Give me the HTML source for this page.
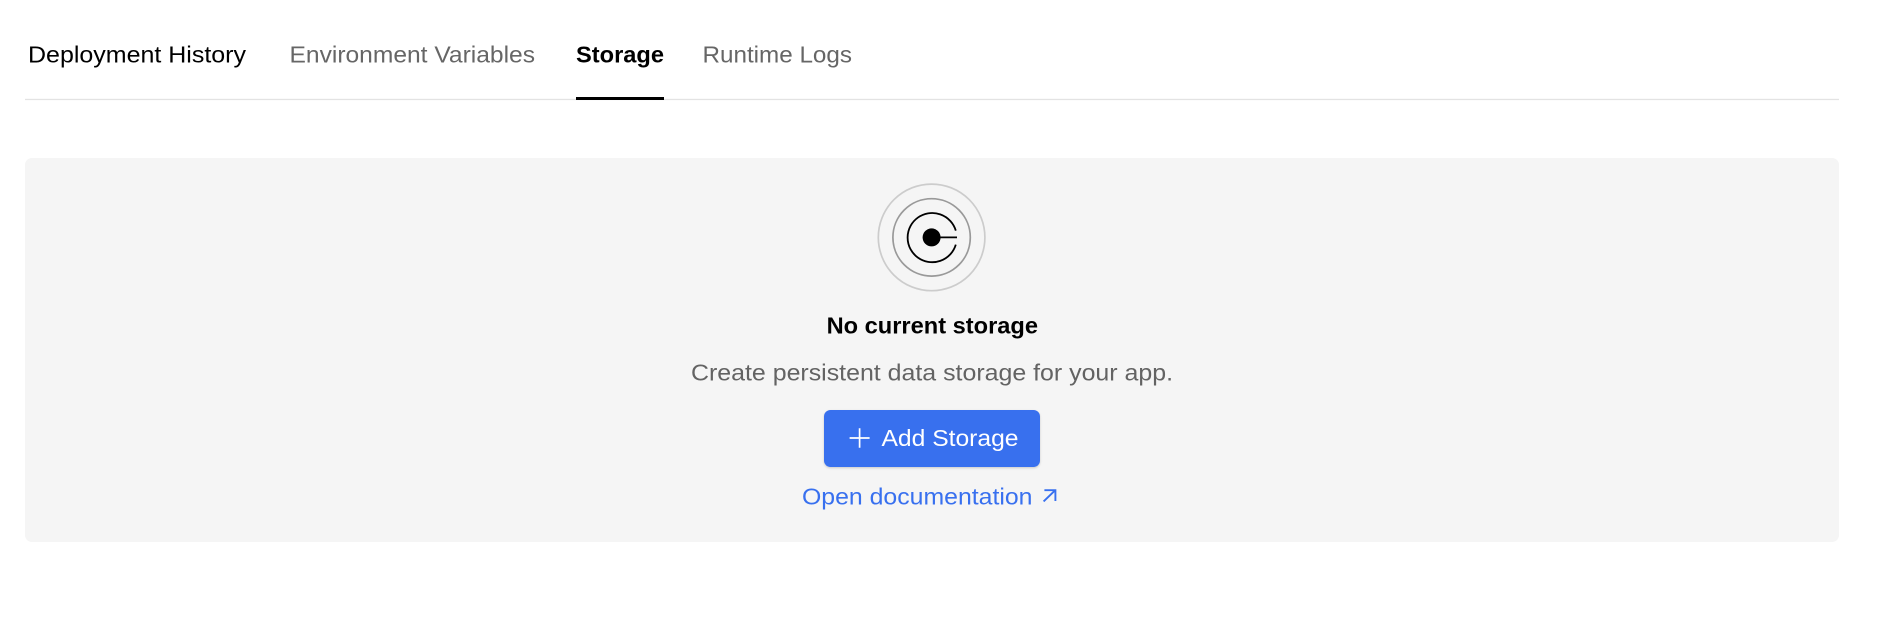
<!DOCTYPE html>
<html lang="en">
<head>
<meta charset="utf-8">
<title>Storage</title>
<style>
html,body{margin:0;padding:0;width:1884px;height:642px;background:#fff;overflow:hidden}
svg{display:block;position:absolute;left:0;top:0}
text{font-family:"Liberation Sans",sans-serif;font-size:23px}
.b{font-weight:700}
</style>
</head>
<body>
<svg width="1884" height="642" viewBox="0 0 1884 642" xmlns="http://www.w3.org/2000/svg">
  <defs>
    <filter id="s" x="-5%" y="-10%" width="110%" height="125%">
      <feDropShadow dx="0" dy="1" stdDeviation="1" flood-color="#000" flood-opacity=".18"/>
    </filter>
  </defs>
  <!-- tabs -->
  <text x="28" y="62.6" fill="#000" textLength="218" lengthAdjust="spacingAndGlyphs">Deployment History</text>
  <text x="289.5" y="62.6" fill="#666" textLength="245.5" lengthAdjust="spacingAndGlyphs">Environment Variables</text>
  <text class="b" x="576" y="62.6" fill="#000" textLength="88" lengthAdjust="spacingAndGlyphs">Storage</text>
  <text x="702.5" y="62.6" fill="#666" textLength="149.5" lengthAdjust="spacingAndGlyphs">Runtime Logs</text>
  <rect x="25" y="98.8" width="1814" height="1.3" fill="#e3e3e3"/>
  <rect x="576" y="97" width="88" height="3" fill="#000"/>
  <!-- card -->
  <rect x="25" y="158" width="1814" height="384" rx="7" fill="#f5f5f5"/>
  <!-- icon -->
  <circle cx="931.6" cy="237.4" r="53.3" fill="none" stroke="#cccccc" stroke-width="1.7"/>
  <circle cx="931.6" cy="237.4" r="38.7" fill="none" stroke="#999999" stroke-width="1.7"/>
  <path d="M955.8 230.6A24.6 24.6 0 1 0 955.8 244.6" fill="none" stroke="#000" stroke-width="1.8"/>
  <circle cx="931.6" cy="237.4" r="9" fill="#000"/>
  <path d="M936 237.4H957" fill="none" stroke="#000" stroke-width="1.8"/>
  <!-- copy -->
  <text class="b" x="826.6" y="333.5" fill="#000" textLength="211.4" lengthAdjust="spacingAndGlyphs">No current storage</text>
  <text x="691" y="380.3" fill="#636363" textLength="482" lengthAdjust="spacingAndGlyphs">Create persistent data storage for your app.</text>
  <!-- button -->
  <rect x="824" y="410" width="216" height="57" rx="6.5" fill="#3870ee" filter="url(#s)"/>
  <path d="M849.6 438H869.6M859.6 428.2V447.8" fill="none" stroke="#fff" stroke-width="1.7"/>
  <text x="881.5" y="446" fill="#fff" textLength="137" lengthAdjust="spacingAndGlyphs">Add Storage</text>
  <!-- link -->
  <text x="802" y="504.6" fill="#3870ef" textLength="230.5" lengthAdjust="spacingAndGlyphs">Open documentation</text>
  <path d="M1043.6 501.4L1054.6 490.8M1044.4 490.2H1055.4V501" fill="none" stroke="#3870ef" stroke-width="1.9"/>
</svg>
</body>
</html>
